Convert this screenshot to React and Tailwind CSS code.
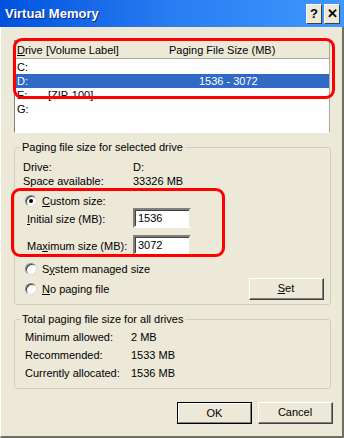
import React from 'react';

const font = { fontFamily: '"Liberation Sans", Arial, sans-serif' };

function Radio({ checked }) {
    return (
        <span className="relative inline-block w-[12px] h-[12px] rounded-full bg-white border border-t-[#808080] border-l-[#808080] border-b-[#e0ded5] border-r-[#e0ded5] shadow-[inset_1px_1px_0_#404040]">
            {checked && <span className="absolute left-[3px] top-[3px] w-[4px] h-[4px] rounded-full bg-black" />}
        </span>
    );
}

function Field({ value }) {
    return (
        <div className="w-[58px] h-[20px] bg-white border-2 border-t-[#808080] border-l-[#808080] border-b-white border-r-[#ece9d8] shadow-[inset_1px_1px_0_#404040] px-[3px] leading-[16px]">
            {value}
        </div>
    );
}

function Btn({ children, isDefault }) {
    return (
        <div className={`w-[75px] h-[22px] flex items-center justify-center border ${isDefault ? 'border-black' : 'border-t-white border-l-white border-b-[#404040] border-r-[#404040]'}`}>
            <div className={`w-full h-full flex items-center justify-center ${isDefault ? 'border border-t-white border-l-white border-b-[#808080] border-r-[#808080]' : 'border-b border-r border-[#808080]'}`}>
                {children}
            </div>
        </div>
    );
}

function TitleBtn({ children }) {
    return (
        <div className="w-[16px] h-[20px] bg-[#ece9d8] border border-t-white border-l-white border-b-[#404040] border-r-[#404040] flex items-center justify-center text-black font-bold text-[13px]">
            {children}
        </div>
    );
}

export default function App() {
    const drives = [
        { d: 'C:', label: '', size: '' },
        { d: 'D:', label: '', size: '1536 - 3072', selected: true },
        { d: 'E:', label: '[ZIP-100]', size: '' },
        { d: 'G:', label: '', size: '' },
    ];

    return (
        <div className="relative w-[344px] h-[438px] flex flex-col bg-[#ece9d8] text-[11px] text-black overflow-hidden" style={font}>
            {/* title bar */}
            <div className="h-[27px] shrink-0 flex items-center justify-between pl-[5px] pr-[4px] bg-gradient-to-r from-[#0052de] via-[#2a7cf2] to-[#3f98ff]">
                <div className="text-white font-bold text-[13px] [text-shadow:1px_1px_0_#0a2b7a]">Virtual Memory</div>
                <div className="flex gap-[2px]">
                    <TitleBtn>?</TitleBtn>
                    <TitleBtn>✕</TitleBtn>
                </div>
            </div>

            <div className="flex-1 flex flex-col border-l border-l-white border-r-2 border-r-[#716f64] border-b-2 border-b-[#716f64]">
                {/* drive list */}
                <div className="mt-[13px] ml-[13px] w-[316px] h-[93px] flex flex-col border border-t-[#808080] border-l-[#808080] border-b-white border-r-[#aca899]">
                    <div className="h-[18px] shrink-0 flex items-center border-b border-[#aca899] pl-[2px] pt-[1px]">
                        <span className="w-[29px]"><u>D</u>rive</span>
                        <span className="w-[123px]">[Volume Label]</span>
                        <span>Paging File Size (MB)</span>
                    </div>
                    <div className="flex-1 bg-white pt-[1px]">
                        {drives.map((r) => (
                            <div key={r.d} className={`h-[14px] flex items-center pl-[2px] ${r.selected ? 'bg-[#316ac5] text-white' : ''}`}>
                                <span className="w-[31px]">{r.d}</span>
                                <span className="w-[151px]">{r.label}</span>
                                <span>{r.size}</span>
                            </div>
                        ))}
                    </div>
                </div>

                {/* selected drive group */}
                <fieldset className="mt-[8px] ml-[13px] w-[317px] border border-[#d0d0bf] rounded-[3px] pl-[8px] pr-[6px] pb-[4px]">
                    <legend className="-ml-[3px] px-[2px] leading-[13px]">Paging file size for selected drive</legend>
                    <div className="pt-[6px] flex h-[20px] items-center">
                        <span className="w-[110px]">Drive:</span>
                        <span>D:</span>
                    </div>
                    <div className="flex h-[14px] items-center">
                        <span className="w-[110px]">Space available:</span>
                        <span>33326 MB</span>
                    </div>
                    <div className="mt-[6px] h-[14px] flex items-center gap-[5px] pl-[2px]">
                        <Radio checked />
                        <span><u>C</u>ustom size:</span>
                    </div>
                    <div className="h-[20px] flex items-center pl-[4px]">
                        <span className="w-[106px] pt-[3px]"><u>I</u>nitial size (MB):</span>
                        <Field value="1536" />
                    </div>
                    <div className="mt-[7px] h-[20px] flex items-center pl-[4px]">
                        <span className="w-[106px] pt-[3px]">Ma<u>x</u>imum size (MB):</span>
                        <Field value="3072" />
                    </div>
                    <div className="mt-[7px] h-[14px] flex items-center gap-[5px] pl-[2px]">
                        <Radio />
                        <span>S<u>y</u>stem managed size</span>
                    </div>
                    <div className="mt-[2px] h-[22px] flex items-center justify-between">
                        <div className="flex items-center gap-[5px] pl-[2px]">
                            <Radio />
                            <span><u>N</u>o paging file</span>
                        </div>
                        <Btn><span><u>S</u>et</span></Btn>
                    </div>
                </fieldset>

                {/* totals group */}
                <fieldset className="mt-[8px] ml-[13px] w-[317px] border border-[#d0d0bf] rounded-[3px] pl-[10px] pb-[8px]">
                    <legend className="-ml-[5px] px-[2px] leading-[13px]">Total paging file size for all drives</legend>
                    <div className="pt-[4px] flex flex-col gap-[4px]">
                        <div className="h-[14px] flex items-center"><span className="w-[106px]">Minimum allowed:</span><span>2 MB</span></div>
                        <div className="h-[14px] flex items-center"><span className="w-[106px]">Recommended:</span><span>1533 MB</span></div>
                        <div className="h-[14px] flex items-center"><span className="w-[106px]">Currently allocated:</span><span>1536 MB</span></div>
                    </div>
                </fieldset>

                <div className="mt-[13px] ml-[176px] flex gap-[6px]">
                    <Btn isDefault>OK</Btn>
                    <Btn>Cancel</Btn>
                </div>
            </div>

            {/* red annotation outlines */}
            <div className="absolute left-[13px] top-[38px] w-[322px] h-[61px] border-[3px] border-[#ff0000] rounded-[9px] pointer-events-none" />
            <div className="absolute left-[11px] top-[188px] w-[214px] h-[69px] border-[3px] border-[#ff0000] rounded-[9px] pointer-events-none" />
        </div>
    );
}
